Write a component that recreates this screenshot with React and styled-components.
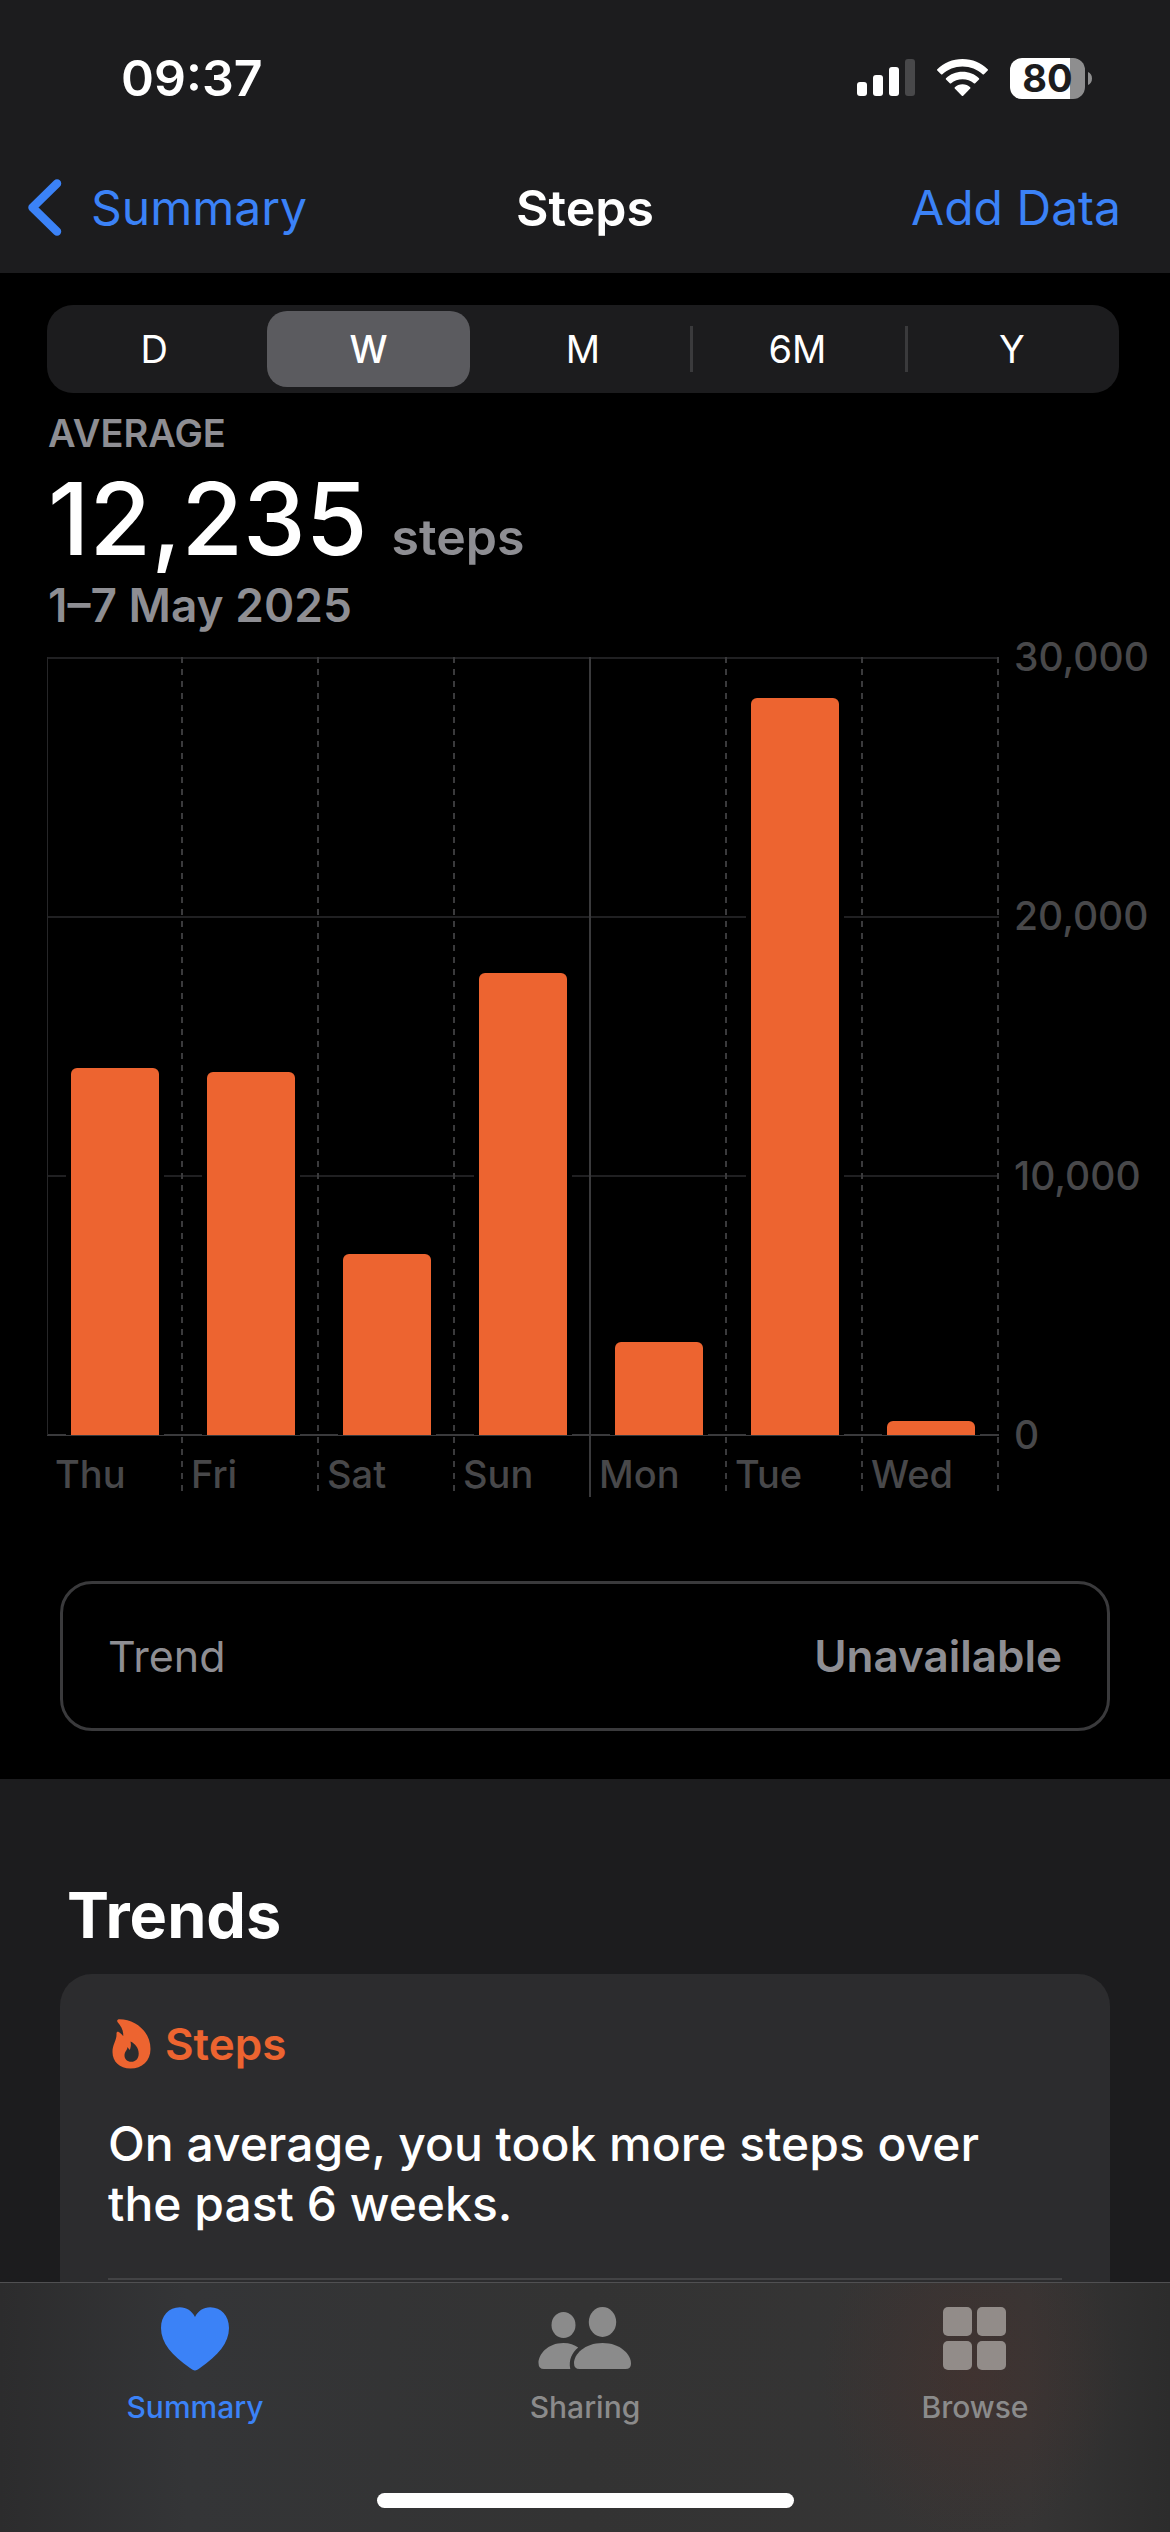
import React, { useState } from 'react';
import styled, { createGlobalStyle, css } from 'styled-components';

const color = {
  blue: '#3b82f7',
  orange: '#ed6430',
  panel: '#1c1c1e',
  card: '#2c2c2e',
  line: '#3a3a3c',
  faint: '#48484a',
  muted: '#8e8e93',
};

const GlobalStyle = createGlobalStyle`
  *, *::before, *::after { box-sizing: border-box; }
  body {
    margin: 0;
    background: #000;
    color: #fff;
    font-family: Inter, 'Liberation Sans', sans-serif;
    overflow: hidden;
  }
  h1, h2, p { margin: 0; }
  button { font: inherit; color: inherit; background: none; border: 0; padding: 0; }
`;

const Screen = styled.div`
  display: flex;
  flex-direction: column;
  height: 100vh;
`;

const Header = styled.header`
  background: ${color.panel};
  flex: none;
`;

const StatusBar = styled.div`
  display: flex;
  justify-content: space-between;
  align-items: center;
  height: 156px;
  padding: 0 78px 0 121px;
`;

const Clock = styled.time`
  font-size: 50px;
  font-weight: 600;
  line-height: 60px;
`;

const StatusIcons = styled.div`
  display: flex;
  align-items: center;
  gap: 22px;
`;

const Battery = styled.div`
  display: flex;
  align-items: center;
  gap: 3px;
`;

const BatteryBody = styled.div`
  display: grid;
  place-items: center;
  width: 75px;
  height: 41px;
  border-radius: 12px;
  background: linear-gradient(to right, #fff 80%, #8e8e8f 80%);
  color: ${color.panel};
  font-size: 38px;
  font-weight: 700;
  line-height: 41px;
`;

const NavBar = styled.nav`
  display: grid;
  grid-template-columns: 1fr auto 1fr;
  align-items: center;
  height: 117px;
  padding: 0 27px 14px;
  font-size: 48px;
  line-height: 60px;
`;

const BackLink = styled.a`
  display: flex;
  align-items: center;
  gap: 28px;
  color: ${color.blue};
  text-decoration: none;
`;

const NavTitle = styled.h1`
  font-size: 50px;
  font-weight: 600;
`;

const NavAction = styled.button`
  justify-self: end;
  padding-right: 22px;
  color: ${color.blue};
`;

const Content = styled.main`
  flex: 1;
  min-height: 0;
  overflow: hidden;
  background: ${color.panel};
`;

const Summary = styled.section`
  display: flex;
  flex-direction: column;
  padding: 32px 0 48px;
  background: #000;
`;

const Segmented = styled.div`
  display: grid;
  grid-template-columns: repeat(5, 1fr);
  height: 88px;
  margin: 0 51px 0 47px;
  border-radius: 26px;
  background: ${color.panel};
`;

const Segment = styled.button`
  display: flex;
  padding: 6px;
  font-size: 38px;
  font-weight: ${(p) => (p.$active ? 500 : 400)};
  background: ${(p) => (p.$divided ? `linear-gradient(${color.line}, ${color.line}) left center / 3px 46px no-repeat` : 'none')};

  span {
    display: grid;
    place-items: center;
    flex: 1;
    height: 76px;
    border-radius: 20px;
    background: ${(p) => (p.$active ? '#5b5b5f' : 'transparent')};
  }
`;

const Stats = styled.div`
  display: flex;
  flex-direction: column;
  padding: 16px 48px 0;
  color: ${color.muted};
  font-weight: 600;
`;

const Caption = styled.span`
  font-size: 38px;
  line-height: 48px;
`;

const Total = styled.p`
  display: flex;
  align-items: baseline;
  gap: 24px;
  font-size: 50px;
  line-height: 60px;

  strong {
    color: #fff;
    font-size: 100px;
    font-weight: 500;
    line-height: 124px;
  }
`;

const Period = styled.p`
  font-size: 46px;
  line-height: 48px;
`;

const Chart = styled.figure`
  display: flex;
  gap: 15px;
  margin: 28px 0 0 47px;
`;

const Plot = styled.div`
  display: grid;
  grid-template-columns: repeat(7, 1fr);
  flex: 1;
  background:
    linear-gradient(#262628, #262628) 0 0 / 1px 778px no-repeat,
    linear-gradient(#202022, #202022) 0 0 / 100% 2px no-repeat,
    linear-gradient(#202022, #202022) 0 259px / 100% 2px no-repeat,
    linear-gradient(#202022, #202022) 0 518px / 100% 2px no-repeat,
    linear-gradient(${color.line}, ${color.line}) 0 777px / 100% 2px no-repeat;
`;

const dashed = css`repeating-linear-gradient(${color.line} 0 6px, transparent 6px 12px)`;

const Day = styled.div`
  display: flex;
  flex-direction: column;
  height: 840px;
  background: ${(p) => (p.$solid ? css`linear-gradient(${color.line}, ${color.line})` : dashed)} right top / 2px 100% no-repeat;
`;

const BarArea = styled.div`
  display: flex;
  align-items: flex-end;
  flex: none;
  height: 778px;
  padding: 0 24px;
`;

const Bar = styled.div`
  flex: 1;
  border-radius: 6px 6px 0 0;
  background: ${color.orange};
  box-shadow: 5px 0 #000, -5px 0 #000;
`;

const DayLabel = styled.span`
  flex: none;
  padding-left: 8px;
  color: ${color.faint};
  font-size: 38px;
  font-weight: 500;
  line-height: 78px;
`;

const Scale = styled.div`
  display: flex;
  flex-direction: column;
  justify-content: space-between;
  width: 156px;
  height: 822px;
  margin-top: -22px;
  color: ${color.faint};
  font-size: 39px;
  font-weight: 500;
  line-height: 44px;
`;

const TrendBox = styled.div`
  display: flex;
  align-items: center;
  justify-content: space-between;
  height: 150px;
  margin: 84px 60px 0;
  padding: 0 45px;
  border: 3px solid ${color.line};
  border-radius: 32px;
  color: ${color.muted};
  font-size: 43px;

  strong { font-weight: 600; font-size: 44px; }
`;

const TrendsSection = styled.section`
  padding: 96px 60px 0;
`;

const SectionTitle = styled.h2`
  padding-left: 7px;
  font-size: 63px;
  font-weight: 700;
  line-height: 80px;
`;

const Card = styled.article`
  margin-top: 19px;
  padding: 42px 48px;
  height: 420px;
  border-radius: 32px;
  background: ${color.card};
`;

const CardTitle = styled.div`
  display: flex;
  align-items: center;
  gap: 14px;
  padding-left: 4px;
  color: ${color.orange};
  font-size: 44px;
  font-weight: 600;
  line-height: 56px;
`;

const CardText = styled.p`
  margin-top: 42px;
  padding-bottom: 44px;
  border-bottom: 2px solid #434345;
  font-size: 48px;
  font-weight: 500;
  line-height: 60px;
`;

const TabBar = styled.nav`
  display: flex;
  flex-direction: column;
  align-items: center;
  flex: none;
  height: 250px;
  border-top: 1px solid #505052;
  background:
    radial-gradient(ellipse 150px 170px at 83% 36%, rgba(78, 48, 42, 0.42), transparent),
    linear-gradient(to right, #2c2c2d, #343537 16%, #333 50%, #363535 88%, #2c2c2c);
`;

const Tabs = styled.div`
  display: grid;
  grid-template-columns: repeat(3, 1fr);
  width: 100%;
  padding-top: 24px;
`;

const Tab = styled.a`
  display: flex;
  flex-direction: column;
  align-items: center;
  gap: 17px;
  color: ${(p) => (p.$active ? color.blue : '#8b8b8b')};
  font-size: 30px;
  font-weight: 500;
  line-height: 38px;
  text-decoration: none;
`;

const HomeIndicator = styled.div`
  width: 417px;
  height: 15px;
  margin-top: 67px;
  border-radius: 8px;
  background: #fff;
`;

const SignalIcon = () => (
  <svg width="58" height="38" viewBox="0 0 58 38" fill="#fff" aria-hidden="true">
    <rect x="0" y="23" width="10" height="14" rx="3" />
    <rect x="16" y="16" width="10" height="21" rx="3" />
    <rect x="32" y="8" width="10" height="29" rx="3" />
    <rect x="48" y="0" width="10" height="37" rx="3" fill="#48484a" />
  </svg>
);

const WifiIcon = () => (
  <svg width="51" height="38" viewBox="0 0 51 38" fill="#fff" aria-hidden="true">
    <path d="M25.500 0C35.500 0 44.300 3.800 50.700 10.200Q51.300 10.900 50.700 11.600L47 15.300Q46.300 15.900 45.600 15.300C40.300 10.300 33.300 7.500 25.500 7.500S10.700 10.300 5.400 15.300Q4.700 15.900 4 15.300L.3 11.600Q-.3 10.900.3 10.200C6.700 3.800 15.500 0 25.500 0Z" />
    <path d="M25.500 12.800C31.900 12.800 37.700 15.200 42 19.200Q42.600 19.900 42 20.600L38.200 24.300Q37.500 24.900 36.800 24.300C33.800 21.700 29.800 20.200 25.500 20.200S17.200 21.700 14.200 24.300Q13.500 24.900 12.800 24.300L9 20.600Q8.400 19.900 9 19.200C13.300 15.200 19.100 12.800 25.500 12.800Z" />
    <path d="M25.500 25.300C28.500 25.300 31.200 26.400 33.200 28.200Q33.800 28.900 33.200 29.600L26.200 36.700Q25.500 37.300 24.800 36.700L17.800 29.600Q17.200 28.900 17.800 28.200C19.800 26.400 22.500 25.300 25.500 25.300Z" />
  </svg>
);

const BatteryTip = () => (
  <svg width="4" height="13" viewBox="0 0 4 13" fill="#8e8e8f" aria-hidden="true">
    <path d="M0 0C2.500 1 4 3.500 4 6.500S2.500 12 0 13Z" />
  </svg>
);

const ChevronIcon = () => (
  <svg width="36" height="58" viewBox="0 0 36 58" fill="none" stroke={color.blue} strokeWidth="8.500" strokeLinecap="round" strokeLinejoin="round" aria-hidden="true">
    <path d="M30 4.500L5.500 28.500L30 52.500" />
  </svg>
);

const FlameIcon = () => (
  <svg width="39" height="50" viewBox="0 0 39 50" fill={color.orange} aria-hidden="true">
    <path fillRule="evenodd" d="M5.500 3C4.600 1.300 5.500.2 7.500.2C23 .4 38.500 12 38.500 30C38.500 42 30 49.500 18.500 49.500C7.500 49.500.5 42.500.5 33C.5 25 5 21.500 4.500 14.500C4.500 12.800 5.700 12.400 7 13.200C9 14.300 10.500 15.800 11.200 17.200C11.600 11 9 7 5.500 3ZM18.500 22.500C19.300 26 18.800 28 17.800 31C17 30 16.500 29.500 15.500 28C15.500 31 12.500 32.500 12.500 36.500C12.500 40.200 15.200 42.800 19.200 42.800C23.500 42.800 26.700 39.800 26.700 34.500C26.700 29 23 24.500 18.500 22.500Z" />
  </svg>
);

const HeartIcon = () => (
  <svg width="68" height="64" viewBox="0 0 68 64" fill="currentColor" aria-hidden="true">
    <path d="M34 63.500C32.500 63.500 31 62.300 29 61C11 48.500 0 36 0 21C0 8.500 8 .3 18.800.3C25.500.3 31 4 34 10C37 4 42.500.3 49.200.3C60 .3 68 8.500 68 21C68 36 57 48.500 39 61C37 62.300 35.500 63.500 34 63.500Z" />
  </svg>
);

const PeopleIcon = () => (
  <svg width="94" height="64" viewBox="0 0 94 64" fill="currentColor" aria-hidden="true">
    <ellipse cx="25.500" cy="18" rx="12" ry="13" />
    <ellipse cx="64.500" cy="15" rx="13.700" ry="15" />
    <path d="M36 56C36 47.500 46.500 36 64.500 36S93 47.500 93 56.500Q93 62 87.500 62H41.500Q36 62 36 56Z" />
    <path d="M.5 56C.5 47.500 9.500 36 25.500 36C31.500 36 36.500 37.800 40.200 40.500C34 45.500 30.500 53 32.300 62H6Q.5 62 .5 56Z" />
  </svg>
);

const GridIcon = () => (
  <svg width="64" height="64" viewBox="0 0 64 64" fill="#928c89" aria-hidden="true">
    <rect x="0" y="0" width="29" height="29" rx="5" />
    <rect x="34" y="0" width="29" height="29" rx="5" />
    <rect x="0" y="34" width="29" height="29" rx="5" />
    <rect x="34" y="34" width="29" height="29" rx="5" />
  </svg>
);

const ranges = ['D', 'W', 'M', '6M', 'Y'];
const maxSteps = 30000;
const days = [
  { name: 'Thu', steps: 14150 },
  { name: 'Fri', steps: 14000 },
  { name: 'Sat', steps: 6980 },
  { name: 'Sun', steps: 17820, weekEnd: true },
  { name: 'Mon', steps: 3580 },
  { name: 'Tue', steps: 28420 },
  { name: 'Wed', steps: 540 },
];
const tabs = [
  { name: 'Summary', Icon: HeartIcon },
  { name: 'Sharing', Icon: PeopleIcon },
  { name: 'Browse', Icon: GridIcon },
];

export default function App() {
  const [range, setRange] = useState('W');
  const active = ranges.indexOf(range);

  return (
    <>
      <GlobalStyle />
      <Screen>
        <Header>
          <StatusBar>
            <Clock>09:37</Clock>
            <StatusIcons>
              <SignalIcon />
              <WifiIcon />
              <Battery>
                <BatteryBody>80</BatteryBody>
                <BatteryTip />
              </Battery>
            </StatusIcons>
          </StatusBar>
          <NavBar>
            <BackLink href="#summary">
              <ChevronIcon />
              Summary
            </BackLink>
            <NavTitle>Steps</NavTitle>
            <NavAction type="button">Add Data</NavAction>
          </NavBar>
        </Header>

        <Content>
          <Summary>
            <Segmented>
              {ranges.map((r, i) => (
                <Segment
                  key={r}
                  type="button"
                  aria-pressed={r === range}
                  $active={r === range}
                  $divided={i > 0 && i !== active && i !== active + 1}
                  onClick={() => setRange(r)}
                >
                  <span>{r}</span>
                </Segment>
              ))}
            </Segmented>

            <Stats>
              <Caption>AVERAGE</Caption>
              <Total>
                <strong>12,235</strong>
                <span>steps</span>
              </Total>
              <Period>1–7 May 2025</Period>
            </Stats>

            <Chart>
              <Plot>
                {days.map((d) => (
                  <Day key={d.name} $solid={d.weekEnd}>
                    <BarArea>
                      <Bar style={{ height: `${(d.steps / maxSteps) * 100}%` }} />
                    </BarArea>
                    <DayLabel>{d.name}</DayLabel>
                  </Day>
                ))}
              </Plot>
              <Scale>
                <span>30,000</span>
                <span>20,000</span>
                <span>10,000</span>
                <span>0</span>
              </Scale>
            </Chart>

            <TrendBox>
              <span>Trend</span>
              <strong>Unavailable</strong>
            </TrendBox>
          </Summary>

          <TrendsSection>
            <SectionTitle>Trends</SectionTitle>
            <Card>
              <CardTitle>
                <FlameIcon />
                Steps
              </CardTitle>
              <CardText>On average, you took more steps over the past 6 weeks.</CardText>
            </Card>
          </TrendsSection>
        </Content>

        <TabBar>
          <Tabs>
            {tabs.map(({ name, Icon }, i) => (
              <Tab key={name} href={`#${name.toLowerCase()}`} $active={i === 0}>
                <Icon />
                {name}
              </Tab>
            ))}
          </Tabs>
          <HomeIndicator />
        </TabBar>
      </Screen>
    </>
  );
}
